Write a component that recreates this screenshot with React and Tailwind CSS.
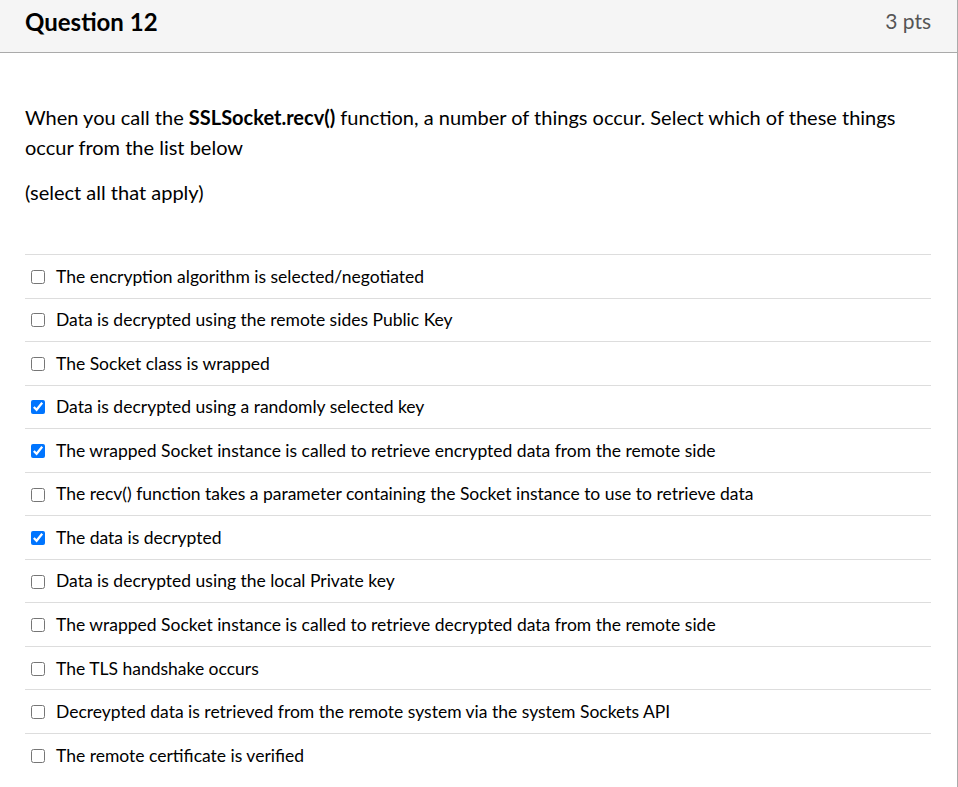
const answers = [
  { text: "The encryption algorithm is selected/negotiated", checked: false },
  { text: "Data is decrypted using the remote sides Public Key", checked: false },
  { text: "The Socket class is wrapped", checked: false },
  { text: "Data is decrypted using a randomly selected key", checked: true },
  { text: "The wrapped Socket instance is called to retrieve encrypted data from the remote side", checked: true },
  { text: "The recv() function takes a parameter containing the Socket instance to use to retrieve data", checked: false },
  { text: "The data is decrypted", checked: true },
  { text: "Data is decrypted using the local Private key", checked: false },
  { text: "The wrapped Socket instance is called to retrieve decrypted data from the remote side", checked: false },
  { text: "The TLS handshake occurs", checked: false },
  { text: "Decreypted data is retrieved from the remote system via the system Sockets API", checked: false },
  { text: "The remote certificate is verified", checked: false },
];

export default function App() {
  return (
    <div
      className="w-[958px] h-[787px] overflow-hidden bg-white border-r border-[#aaaaaa] text-black"
      style={{ fontFamily: "Lato, 'Liberation Sans', sans-serif" }}
    >
      {/* Header */}
      <div className="h-[53px] bg-[#f5f5f5] border-b border-[#aaaaaa] flex items-center justify-between pl-[25px] pr-[26px] pb-[8px]">
        <h2 className="text-[24px] font-bold text-black leading-none">Question 12</h2>
        <span className="text-[21px] text-[#555555] leading-none mb-[4px]">3 pts</span>
      </div>

      {/* Body */}
      <div className="pl-[25px] pr-[26px] pt-[49px]">
        <p className="text-[20px] leading-[30px] pr-[10px]">
          When you call the <strong className="font-bold">SSLSocket.recv()</strong> function, a number of things occur. Select which of these things occur from the list below
        </p>
        <p className="text-[20px] leading-[30px] mt-[15px]">(select all that apply)</p>

        <div className="mt-[47px]">
          {answers.map((a, i) => (
            <label
              key={i}
              className="flex items-center h-[43.55px] pt-[1px] border-t border-[#dddddd] text-[17.5px]"
            >
              <input
                type="checkbox"
                defaultChecked={a.checked}
                className="w-[14px] h-[14px] ml-[6px] mr-[11px] shrink-0"
              />
              <span>{a.text}</span>
            </label>
          ))}
        </div>
      </div>
    </div>
  );
}
